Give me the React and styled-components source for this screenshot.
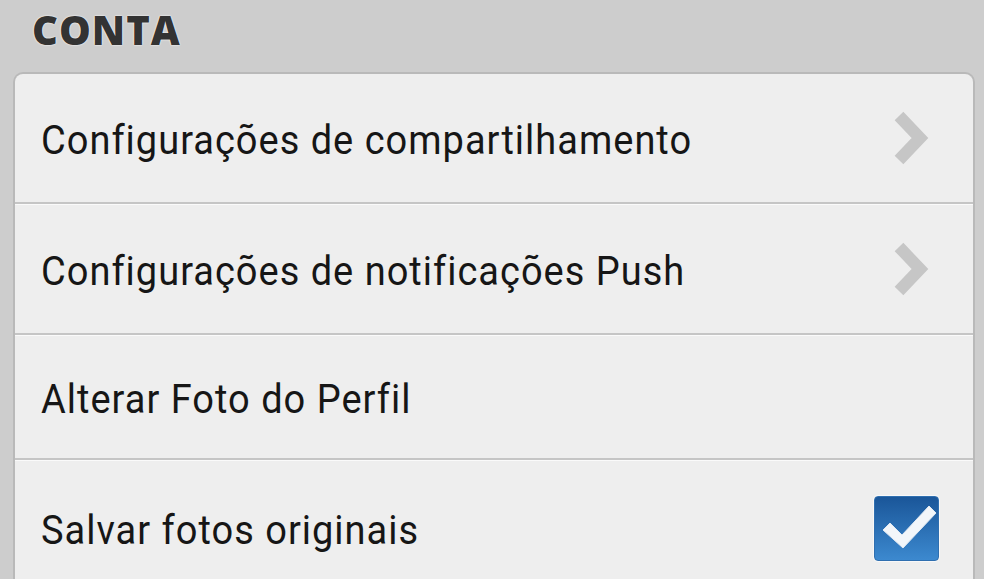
import React from "react";
import styled, { createGlobalStyle } from "styled-components";

const Global = createGlobalStyle`
  html, body { margin: 0; padding: 0; background: #cdcdcd; overflow: hidden; }
  * { box-sizing: border-box; }
`;

const Page = styled.div`
  width: 984px;
  height: 579px;
  background: #cdcdcd;
  display: flex;
  flex-direction: column;
  overflow: hidden;
`;

const SectionTitle = styled.h2`
  margin: 0;
  height: 72px;
  flex-shrink: 0;
  padding: 0 0 14px 32px;
  display: flex;
  align-items: center;
  font-family: "Open Sans", sans-serif;
  font-weight: 800;
  font-size: 40px;
  color: #333333;
  letter-spacing: 1px;
  text-shadow: 0 0 2px #ffffff, 0 0 1px #ffffff;
`;

const Card = styled.div`
  flex-shrink: 0;
  margin: 0 9px 0 13px;
  background: #eeeeee;
  border: 2px solid #b9b9b9;
  border-bottom: none;
  border-radius: 10px 10px 0 0;
  display: flex;
  flex-direction: column;
`;

const Row = styled.div`
  height: ${(p) => p.$h}px;
  display: flex;
  align-items: center;
  justify-content: space-between;
  padding: 0 ${(p) => p.$pr}px 0 26px;
  flex-shrink: 0;
`;

const Divider = styled.div`
  height: 3px;
  border-top: 2px solid #c5c5c5;
  background: #fafafa;
  flex-shrink: 0;
`;

const Label = styled.span`
  font-family: Roboto, "Noto Sans", sans-serif;
  font-size: 38px;
  letter-spacing: 1px;
  color: #161616;
  display: inline-block;
  transform: scaleY(1.06);
  transform-origin: left center;
  margin-top: 3px;
`;

const Chevron = () => (
  <svg width="38" height="54" viewBox="0 0 38 54">
    <polyline
      points="7,5 28,27 7,49"
      fill="none"
      stroke="#c6c6c6"
      strokeWidth="12"
      strokeLinejoin="miter"
    />
  </svg>
);

const CheckBox = styled.div`
  width: 65px;
  height: 65px;
  border-radius: 4px;
  background: linear-gradient(#1a5699, #3c89cf);
  border: 1px solid #2f6fb0;
  box-shadow: 0 0 0 1px #f8f8f8;
  display: flex;
  align-items: center;
  justify-content: center;
`;

const Check = () => (
  <svg width="63" height="63" viewBox="0 0 63 63">
    <polygon
      points="8,33 15,26 27,38 54,9 61,16 28,51"
      fill="#f2f6fa"
      stroke="#dfe8f2"
      strokeWidth="1"
      strokeLinejoin="round"
    />
  </svg>
);

const items = [
  { label: "Configurações de compartilhamento", h: 128, kind: "chevron" },
  { label: "Configurações de notificações Push", h: 128, kind: "chevron" },
  { label: "Alterar Foto do Perfil", h: 122, kind: null },
  { label: "Salvar fotos originais", h: 134, kind: "check" },
];

export default function App() {
  return (
    <Page>
      <Global />
      <SectionTitle>CONTA</SectionTitle>
      <Card>
        {items.map((it, i) => (
          <React.Fragment key={it.label}>
            {i > 0 && <Divider />}
            <Row $h={it.h} $pr={it.kind === "check" ? 34 : 43}>
              <Label>{it.label}</Label>
              {it.kind === "chevron" && <Chevron />}
              {it.kind === "check" && (
                <CheckBox>
                  <Check />
                </CheckBox>
              )}
            </Row>
          </React.Fragment>
        ))}
      </Card>
    </Page>
  );
}
